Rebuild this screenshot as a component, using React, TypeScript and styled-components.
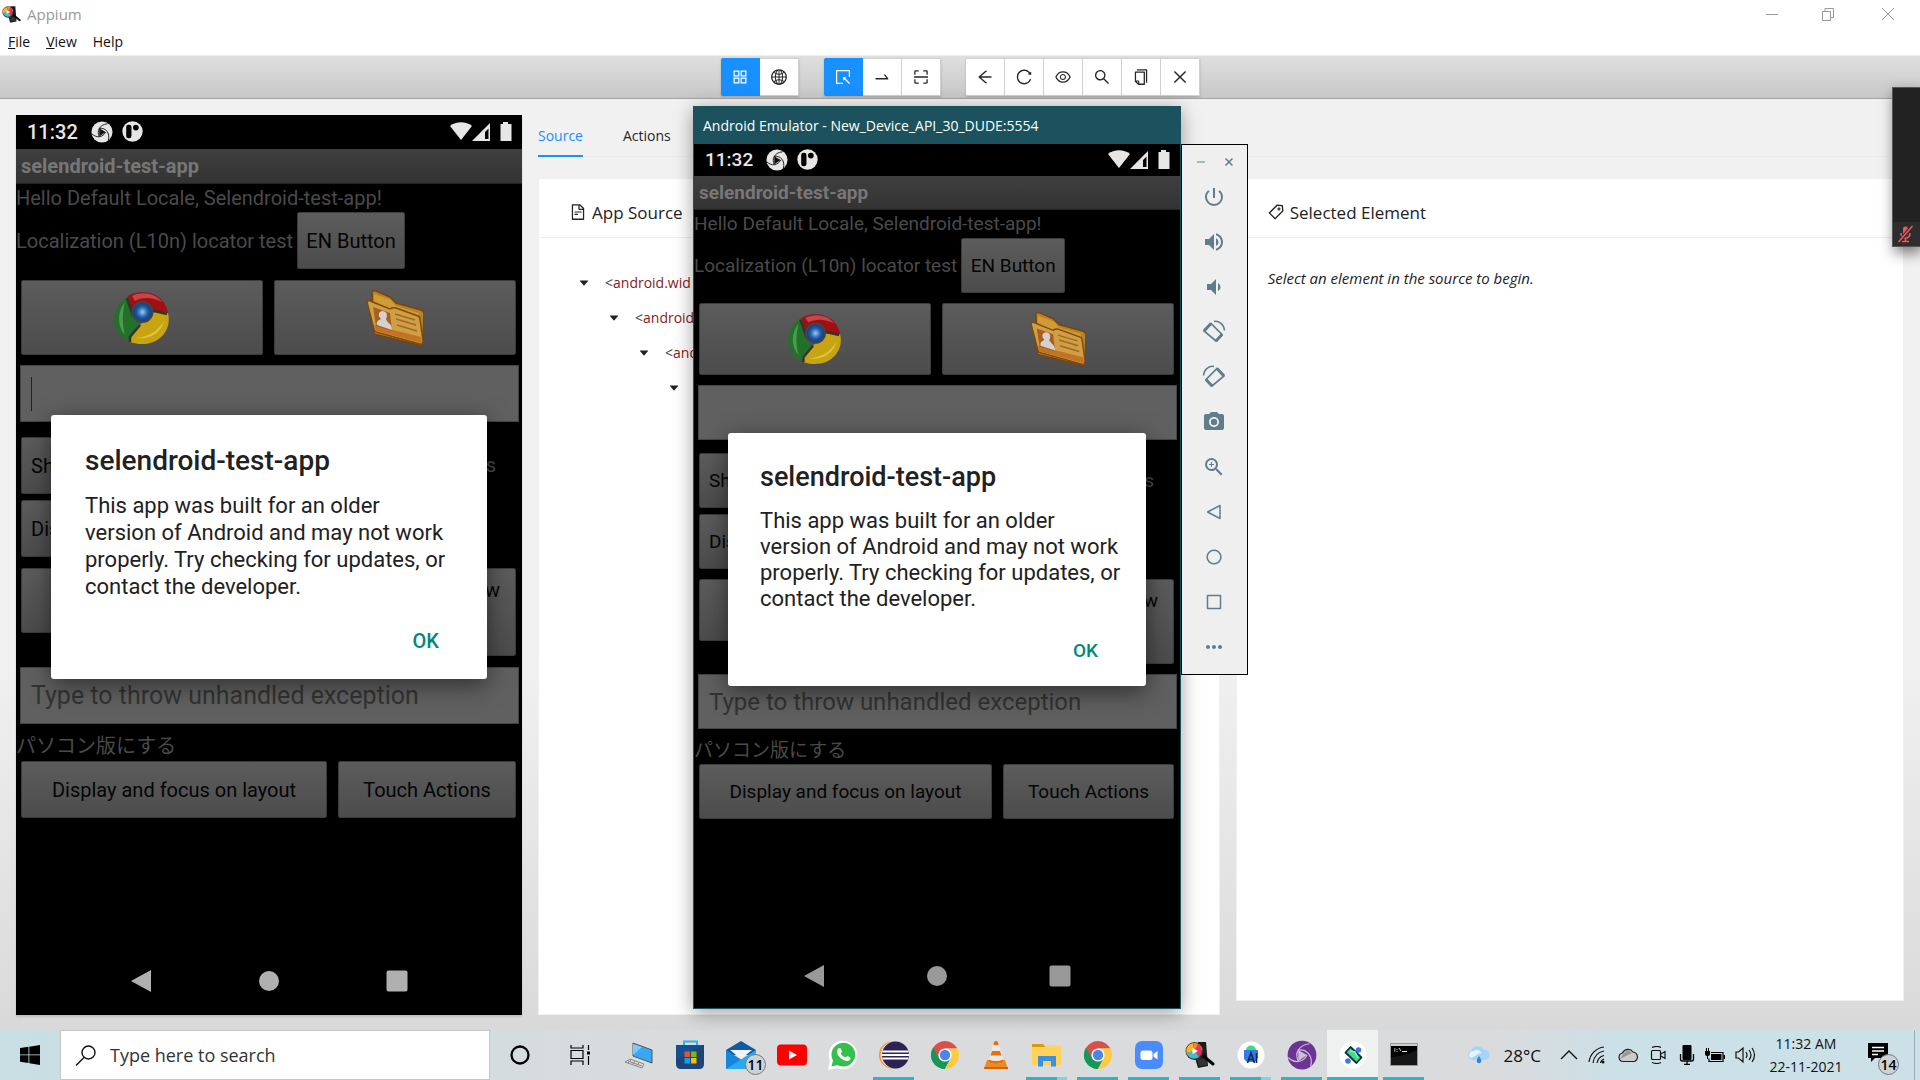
import React, { useId } from 'react';
import styled, { createGlobalStyle, css } from 'styled-components';
import {
  AiOutlineAppstore, AiOutlineGlobal, AiOutlineSelect, AiOutlineSwapRight, AiOutlineScan,
  AiOutlineArrowLeft, AiOutlineReload, AiOutlineEye, AiOutlineSearch, AiOutlineCopy,
  AiOutlineClose, AiOutlineFileText, AiOutlineTag, AiFillCaretDown,
} from 'react-icons/ai';
import { MdPowerSettingsNew, MdVolumeUp, MdVolumeDown, MdPhotoCamera, MdZoomIn, MdMoreHoriz } from 'react-icons/md';

const ui = `"Segoe UI", "Open Sans", "Noto Sans", sans-serif`;
const droid = `Roboto, "Noto Sans CJK JP", sans-serif`;

const GlobalStyle = createGlobalStyle`
  * { box-sizing: border-box; }
  body { margin: 0; font-family: ${ui}; font-size: 14px; color: #222; overflow: hidden; }
  button, input { font: inherit; color: inherit; border: 0; padding: 0; margin: 0; background: none; }
  p, h1, h2 { margin: 0; font-weight: 400; }
  svg { display: block; flex: none; }
`;

const Desktop = styled.div`
  position: relative;
  display: flex;
  flex-direction: column;
  height: 100vh;
`;

/* ---------- Appium window ---------- */

const TitleBar = styled.header`
  display: flex;
  align-items: center;
  height: 28px;
  padding-left: 2px;
  background: #fff;
  color: #999;
`;
const TitleText = styled.h1`
  flex: 1;
  padding-left: 6px;
  font-size: 15px;
`;
const WindowButton = styled.button`
  display: flex;
  justify-content: center;
  width: 56px;
  color: #999;
  &:last-child { width: 64px; }
`;
const MenuBar = styled.nav`
  display: flex;
  gap: 16px;
  height: 27px;
  padding-left: 8px;
  background: #fff;
`;
const MenuButton = styled.button`
  height: 27px;
  padding-bottom: 1px;
  font-size: 14px;
  color: #111;
`;
const ToolBar = styled.div`
  display: flex;
  flex: none;
  justify-content: center;
  align-items: center;
  gap: 25px;
  height: 44px;
  border-top: 1px solid #eee;
  border-bottom: 1px solid #a3a3a3;
  background: linear-gradient(#dfdfdf, #c7c7c7);
`;
const ToolGroup = styled.div`
  display: flex;
  box-shadow: 0 1px 2px rgba(0, 0, 0, 0.2);
`;
const ToolButton = styled.button<{ $on?: boolean }>`
  display: flex;
  align-items: center;
  justify-content: center;
  width: 39px;
  height: 38px;
  border: 1px solid ${p => (p.$on ? '#1890ff' : '#d0d0d0')};
  border-left: 0;
  background: ${p => (p.$on ? '#1890ff' : '#fff')};
  color: ${p => (p.$on ? '#fff' : '#262626')};
  font-size: 18px;
  &:first-child { border-radius: 2px 0 0 2px; }
  &:last-child { border-radius: 0 2px 2px 0; }
`;
const Main = styled.main`
  display: flex;
  flex: 1;
  gap: 16px;
  min-height: 0;
  padding: 16px 16px 15px;
  background: linear-gradient(#f1f1f1 0%, #f1f1f1 60%, #d9d9d9 100%);
`;
const Mirror = styled.section`
  display: flex;
  flex: 0 0 506px;
  box-shadow: 0 2px 2px rgba(0, 0, 0, 0.12);
`;
const Inspector = styled.section`
  display: flex;
  flex: 1;
  flex-direction: column;
`;
const Tabs = styled.div`
  display: flex;
  gap: 40px;
  height: 42px;
  margin-bottom: 21px;
  border-bottom: 1px solid #ececec;
`;
const Tab = styled.button<{ $on?: boolean }>`
  height: 42px;
  color: ${p => (p.$on ? '#1890ff' : '#262626')};
  border-bottom: 2px solid ${p => (p.$on ? '#1890ff' : 'transparent')};
  font-size: 14px;
`;
const Cards = styled.div`
  display: grid;
  flex: 1;
  grid-template-columns: 51fr 50fr;
  gap: 16px;
`;
const Card = styled.section<{ $short?: boolean }>`
  margin-bottom: ${p => (p.$short ? 14 : 0)}px;
  border: 1px solid #f0f0f0;
  background: #fff;
`;
const CardHead = styled.header`
  display: flex;
  align-items: center;
  gap: 5px;
  height: 59px;
  padding: 8px 30px 0;
  border-bottom: 1px solid #eee;
  font-size: 18px;
`;
const CardTitle = styled.h2`
  font-size: 17px;
  font-weight: 500;
  color: #222;
`;
const Tree = styled.ul`
  margin: 0;
  padding: 27px 0 0 39px;
  list-style: none;
`;
const TreeRow = styled.li<{ $depth: number }>`
  display: flex;
  align-items: center;
  gap: 15px;
  height: 35px;
  padding-left: ${p => p.$depth * 30}px;
  font-size: 14px;
  color: #8a1a1a;
  svg { color: #222; }
`;
const Angle = styled.span`
  color: #444;
`;
const Hint = styled.p`
  padding: 30px 31px;
  font-size: 15px;
  font-style: italic;
`;

/* ---------- Android screen ---------- */

type Size = {
  status: number; title: number; hello: number; row: number; images: number; gap: number; half: number;
  tall: number; left: number; last: number; jp: number; nav: number; navPad: number; fs: number; time: number; input: number;
  dTop: number; dSide: number; dHeight: number; dPad: number; dTitle: number; dText: number; dLine: number; dAction: number;
  en: number; focus: number; icon: number; fg: string;
};
const large: Size = {
  status: 34, title: 35, hello: 28, row: 57, images: 75, gap: 11, half: 15, tall: 88, left: 65, last: 11, jp: 37, nav: 68,
  navPad: 114, fs: 20, time: 20, input: 25, dTop: 300, dSide: 35, dHeight: 264, dPad: 34, dTitle: 28, dText: 22, dLine: 27,
  dAction: 26, en: 108, focus: 306, icon: 56, fg: '#b0b0b0',
};
const small: Size = {
  status: 32, title: 34, hello: 28, row: 55, images: 72, gap: 10, half: 13, tall: 85, left: 62, last: 10, jp: 35, nav: 64,
  navPad: 109, fs: 19, time: 19, input: 24, dTop: 289, dSide: 34, dHeight: 253, dPad: 32, dTitle: 27, dText: 22, dLine: 26,
  dAction: 24, en: 104, focus: 293, icon: 54, fg: '#999',
};

const Screen = styled.div<{ $s: Size }>`
  position: relative;
  display: flex;
  flex: 1;
  flex-direction: column;
  background: #000;
  color: #4a4a4a;
  font-family: ${droid};
  font-size: ${p => p.$s.fs}px;
  line-height: 24px;
  white-space: nowrap;
`;
const Status = styled.div<{ $s: Size }>`
  display: flex;
  align-items: center;
  height: ${p => p.$s.status}px;
  padding: 0 8px 0 11px;
  color: #e6e6e6;
  font-size: ${p => p.$s.time}px;
  font-weight: 500;
`;
const Notices = styled.div`
  display: flex;
  flex: 1;
  gap: 9px;
  padding-left: 13px;
`;
const Signals = styled.div`
  display: flex;
  align-items: center;
`;
const AppTitle = styled.div<{ $s: Size }>`
  height: ${p => p.$s.title}px;
  padding-left: 5px;
  border-bottom: 1px solid #222;
  background: linear-gradient(#3f3f3f, #333);
  color: #777;
  font-weight: 700;
  line-height: ${p => p.$s.title}px;
`;
const Line = styled.p<{ $s: Size }>`
  height: ${p => p.$s.hello}px;
  line-height: ${p => p.$s.hello}px;
`;
const Row = styled.div<{ $gap?: number; $end?: boolean }>`
  display: flex;
  align-items: flex-start;
  justify-content: ${p => (p.$end ? 'space-between' : 'flex-start')};
  gap: 11px;
  margin-top: ${p => p.$gap || 0}px;
  padding: 0 6px 0 5px;
`;
const Localized = styled.div`
  display: flex;
  align-items: center;
  gap: 4px;
`;
const DroidButton = styled.button<{ $h: number; $w?: number; $start?: boolean }>`
  display: flex;
  flex: ${p => (p.$w ? `0 0 ${p.$w}px` : '1')};
  align-items: center;
  justify-content: ${p => (p.$start ? 'flex-start' : 'center')};
  height: ${p => p.$h}px;
  padding-left: ${p => (p.$start ? 9 : 0)}px;
  border: 1px solid #3c3c3c;
  border-radius: 2px;
  background: linear-gradient(#5c5c5c, #4c4c4c);
  color: #050505;
`;
const EdgeButton = styled(DroidButton)`
  align-items: flex-start;
  justify-content: flex-end;
  padding: 9px 15px 0 0;
`;
const EdgeText = styled.span<{ $s: Size }>`
  padding-right: 20px;
  line-height: ${p => p.$s.row}px;
`;
const Field = styled.input<{ $s: Size; $gap: number }>`
  height: ${p => p.$s.row}px;
  margin: ${p => p.$gap}px 3px 0 4px;
  padding: 0 10px;
  border: 1px solid #444;
  background: #606060;
  font-size: ${p => p.$s.input}px;
  &::placeholder { color: #333; opacity: 1; }
`;
const CaretField = styled.div<{ $caret?: boolean }>`
  display: flex;
  flex-direction: column;
  position: relative;
  ${p => p.$caret && css`
    &::after {
      content: '';
      position: absolute;
      left: 15px;
      top: 22px;
      width: 1px;
      height: 34px;
      background: #222;
    }
  `}
`;
const Japanese = styled.p<{ $s: Size }>`
  height: ${p => p.$s.jp}px;
  padding-top: 8px;
  line-height: ${p => p.$s.jp - 8}px;
`;
const NavBar = styled.div<{ $s: Size }>`
  display: flex;
  align-items: center;
  justify-content: space-between;
  height: ${p => p.$s.nav}px;
  margin-top: auto;
  padding: 0 ${p => p.$s.navPad}px;
  color: ${p => p.$s.fg};
`;
const Dialog = styled.div<{ $s: Size }>`
  position: absolute;
  top: ${p => p.$s.dTop}px;
  left: ${p => p.$s.dSide}px;
  right: ${p => p.$s.dSide}px;
  height: ${p => p.$s.dHeight}px;
  padding: ${p => p.$s.dPad - 5}px 32px 0 ${p => p.$s.dPad}px;
  border-radius: 3px;
  background: #fff;
  box-shadow: 0 6px 24px rgba(0, 0, 0, 0.5);
  color: #212121;
`;
const DialogTitle = styled.h2<{ $s: Size }>`
  font-size: ${p => p.$s.dTitle}px;
  font-weight: 500;
  line-height: 34px;
`;
const DialogText = styled.p<{ $s: Size }>`
  padding-top: 14px;
  font-size: ${p => p.$s.dText}px;
  line-height: ${p => p.$s.dLine}px;
`;
const DialogAction = styled.button<{ $s: Size }>`
  display: block;
  margin: ${p => p.$s.dAction}px 16px 0 auto;
  height: 30px;
  color: #00897b;
  font-weight: 500;
`;

const Swirl = ({ size, fg, bg }: { size: number; fg: string; bg: string }) => (
  <svg width={size} height={size} viewBox="0 0 24 24">
    <circle cx="12" cy="12" r="11.5" fill={fg} />
    <path d="M9 8l7 4-7 5z" fill={bg} />
    <g fill="none" stroke={bg} strokeWidth="1">
      <path d="M9 17C6 11 9 4 18 3" />
      <path d="M9 8c7-1 12 5 10 13" />
      <path d="M16 12c-3 6-10 7-15 2" />
    </g>
  </svg>
);
const PIcon = () => (
  <svg width="21" height="21" viewBox="0 0 20 20">
    <circle cx="10" cy="10" r="9.7" fill="#e6e6e6" />
    <rect x="4" y="3.5" width="5" height="13" rx="2.3" fill="#000" />
    <circle cx="13.2" cy="6.3" r="2.7" fill="#000" />
  </svg>
);
const SignalIcons = () => (
  <svg width="64" height="22" viewBox="0 0 64 22">
    <g fill="#e6e6e6">
      <path d="M0 5C6 0 16 0 22 5L11 19z" />
      <path fillRule="evenodd" d="M22 20L40 2v18zM35 11v7h3.500V7.500z" />
      <path d="M53 1h5v2h3.500v17h-11V3H53z" />
    </g>
  </svg>
);
const OldChrome = ({ size }: { size: number }) => {
  const id = useId();
  return (
    <svg width={size} height={size} viewBox="0 0 56 56">
      <defs>
        <radialGradient id={id}><stop offset="0" stopColor="#9cc6f0" /><stop offset="0.6" stopColor="#1f5ca8" /><stop offset="1" stopColor="#12407c" /></radialGradient>
      </defs>
      <path d="M13 7C22-1 50-1 54 23L28 19 20 30z" fill="#a00f12" />
      <path d="M18 6c9-5 24-3 30 6-10-5-20-5-27-1z" fill="#c2474a" />
      <path d="M14 6l6 24 9 8-12 14C-6 43-4 17 14 6z" fill="#23702a" />
      <path d="M11 12C3 22 3 36 11 45c-3-11-3-22 0-33z" fill="#4d9a50" />
      <path d="M54 23c5 20-14 37-38 29l-1-5 13-14 8-11z" fill="#c9a412" />
      <path d="M50 31c-3 12-15 19-28 17 13-1 22-7 28-17z" fill="#e0c545" />
      <path d="M13 8l6 18M36 20l17 4M26 35L16 47v5" stroke="#333" strokeWidth="2.500" fill="none" />
      <circle cx="28.500" cy="22" r="11" fill="#3e4652" />
      <circle cx="28.500" cy="22" r="9" fill={`url(#${id})`} />
    </svg>
  );
};
const ContactFolder = ({ size }: { size: number }) => (
  <svg width={size} height={size} viewBox="0 0 58 56">
    <path d="M6 2q1-2 4-1l14 6 6 6 25 7q3 1 3 4l-1 28q-1 4-4 3L8 44z" fill="#b98425" stroke="#774412" strokeWidth="1.500" />
    <path d="M8 4l17 6 5 6 23 7-1 4L26 17l-3 2L8 11z" fill="#d09c35" />
    <path d="M1 12q0-2 3-1l20 8q3-2 6-1l22 8q2 1 2 3l3 22q0 4-3 3L10 42q-2-1-2-3z" fill="#cf9f48" stroke="#80490f" strokeWidth="1.500" />
    <path d="M8 35l47 12 1 6L10 41z" fill="#c27422" />
    <path d="M7 17l17 6 2 18-16-5z" fill="#a85f1c" />
    <path d="M16 21c5 0 6 4 4 8 1 4 6 4 6 11l-15-5c-1-4 2-5 4-6-3-3-3-7 1-8z" fill="#d2d2d2" />
    <path d="M29 24l20 6M30 29l20 6M31 35l20 6" stroke="#a26a20" strokeWidth="1.500" />
  </svg>
);

function Android({ s, caret, name }: { s: Size; caret?: boolean; name: string }) {
  return (
    <Screen $s={s}>
      <Status $s={s}>
        <span>11:32</span>
        <Notices><Swirl size={22} fg="#e6e6e6" bg="#111" /><PIcon /></Notices>
        <Signals><SignalIcons /></Signals>
      </Status>
      <AppTitle $s={s}>selendroid-test-app</AppTitle>
      <Line $s={s}>Hello Default Locale, Selendroid-test-app!</Line>
      <Localized>
        <span>Localization (L10n) locator test</span>
        <DroidButton $h={s.row} $w={s.en}>EN Button</DroidButton>
      </Localized>
      <Row $gap={s.gap}>
        <DroidButton $h={s.images} aria-label="Chrome"><OldChrome size={s.icon} /></DroidButton>
        <DroidButton $h={s.images} aria-label="Contacts"><ContactFolder size={s.icon + 2} /></DroidButton>
      </Row>
      <CaretField $caret={caret}>
        <Field $s={s} $gap={10} aria-label={`${name} text`} />
      </CaretField>
      <Row $gap={s.half} $end>
        <DroidButton $h={s.row} $w={120} $start>Sh</DroidButton>
        <EdgeText $s={s}>s</EdgeText>
      </Row>
      <Row $gap={6}>
        <DroidButton $h={s.row} $w={120} $start>Dis</DroidButton>
      </Row>
      <Row $gap={s.gap} $end>
        <DroidButton $h={s.left} $w={200} aria-label="Throw" />
        <EdgeButton $h={s.tall} $w={200}>w</EdgeButton>
      </Row>
      <Field $s={s} $gap={s.last} placeholder="Type to throw unhandled exception" aria-label={`${name} exception`} />
      <Japanese $s={s}>パソコン版にする</Japanese>
      <Row>
        <DroidButton $h={s.row} $w={s.focus}>Display and focus on layout</DroidButton>
        <DroidButton $h={s.row}>Touch Actions</DroidButton>
      </Row>
      <NavBar $s={s}>
        <svg width="22" height="24" viewBox="0 0 22 24"><path d="M1 12L21 1v22z" fill="currentColor" /></svg>
        <svg width="22" height="22" viewBox="0 0 22 22"><circle cx="11" cy="11" r="10" fill="currentColor" /></svg>
        <svg width="22" height="22" viewBox="0 0 22 22"><rect x="0.500" y="0.500" width="21" height="21" rx="2" fill="currentColor" /></svg>
      </NavBar>
      <Dialog $s={s} role="dialog" aria-label={name}>
        <DialogTitle $s={s}>selendroid-test-app</DialogTitle>
        <DialogText $s={s}>
          This app was built for an older<br />version of Android and may not work<br />
          properly. Try checking for updates, or<br />contact the developer.
        </DialogText>
        <DialogAction $s={s}>OK</DialogAction>
      </Dialog>
    </Screen>
  );
}

/* ---------- Emulator window ---------- */

const Emulator = styled.section`
  position: absolute;
  left: 693px;
  top: 106px;
  display: flex;
  align-items: flex-start;
`;
const EmulatorFrame = styled.div`
  display: flex;
  flex-direction: column;
  width: 488px;
  height: 903px;
  border: 1px solid #1c525d;
  box-shadow: 0 4px 18px rgba(0, 0, 0, 0.38);
`;
const EmulatorTitle = styled.header`
  height: 37px;
  padding-left: 9px;
  background: #1c525d;
  color: #fff;
  font-size: 14px;
  line-height: 38px;
  white-space: nowrap;
`;
const SideBar = styled.div`
  position: relative;
  width: 67px;
  margin-top: 38px;
  padding-bottom: 5px;
  border: 1px solid #000;
  background: #efefef;
  color: #607d8b;
`;
const SideTop = styled.div`
  display: flex;
  align-items: center;
  justify-content: center;
  gap: 20px;
  height: 29px;
  padding-top: 4px;
`;
const SideButton = styled.button`
  display: flex;
  align-items: center;
  justify-content: center;
  width: 64px;
  height: 45px;
  font-size: 24px;
`;
const Rotate = ({ flip }: { flip?: boolean }) => (
  <svg width="24" height="24" viewBox="0 0 24 24" fill="none" stroke="currentColor">
    <g transform={flip ? 'translate(24 0) scale(-1 1)' : undefined}>
      <path d="M2 11L9 3.500l11 11L14 21z" strokeWidth="1.700" />
      <path d="M2 11L9 3.500M20 14.500L14 21" strokeWidth="3" />
      <path d="M12 1.500c5-1 10 3 10.500 9" strokeWidth="1.500" />
    </g>
  </svg>
);
const Shape = ({ d }: { d: string }) => (
  <svg width="16" height="16" viewBox="0 0 16 16" fill="none" stroke="currentColor" strokeWidth="1.500" strokeLinejoin="round"><path d={d} /></svg>
);

/* ---------- Meeting thumbnail ---------- */

const Meeting = styled.aside`
  position: absolute;
  right: 0;
  top: 87px;
  display: flex;
  flex-direction: column;
  justify-content: flex-end;
  width: 28px;
  height: 160px;
  border: 1px solid #555;
  border-right: 0;
  background: #222;
  box-shadow: 2px 6px 14px rgba(0, 0, 0, 0.5);
`;
const Muted = styled.div`
  display: flex;
  align-items: center;
  height: 24px;
  padding-left: 4px;
  background: #2d2d2d;
`;

/* ---------- Taskbar ---------- */

const TaskBar = styled.footer`
  display: flex;
  flex: none;
  height: 50px;
  background: linear-gradient(90deg, #c9dfe4 0, #d0dde1 20%, #dadbdd 35%, #dadbdd 78%, #cbe0e7 84%, #cbe0e7 100%);
  color: #111;
`;
const Start = styled.button`
  display: flex;
  align-items: center;
  justify-content: center;
  width: 60px;
`;
const Search = styled.label`
  display: flex;
  align-items: center;
  gap: 14px;
  width: 430px;
  padding-left: 14px;
  border: 1px solid #c6c6c6;
  background: #fff;
`;
const SearchInput = styled.input`
  flex: 1;
  outline: 0;
  font-size: 18px;
  &::placeholder { color: #333; opacity: 1; }
`;
const SystemButton = styled.button`
  display: flex;
  align-items: center;
  justify-content: center;
  width: 60px;
`;
const Apps = styled.div`
  display: flex;
  margin-left: 3px;
`;
const AppButton = styled.button<{ $open?: boolean; $active?: boolean; $many?: boolean }>`
  position: relative;
  display: flex;
  align-items: center;
  justify-content: center;
  width: 51px;
  background: ${p => (p.$active ? '#eff0f0' : 'transparent')};
  ${p => p.$open && css`
    &::after {
      content: '';
      position: absolute;
      bottom: 0;
      left: ${p.$active ? 0 : 5}px;
      right: ${p.$active ? 0 : 5}px;
      height: 3px;
      background: ${p.$many ? 'linear-gradient(90deg, #2ab5cc 75%, #82d3dd 75%)' : '#2ab5cc'};
    }
  `}
`;
const Badge = styled.span`
  position: absolute;
  right: 0;
  bottom: 5px;
  width: 21px;
  height: 21px;
  border: 1px solid #777;
  border-radius: 50%;
  background: #ccd3d6;
  color: #000;
  font-size: 14px;
  font-weight: 600;
  line-height: 19px;
  text-align: center;
`;
const Tray = styled.div`
  display: flex;
  align-items: center;
  margin-left: auto;
`;
const Weather = styled.button`
  display: flex;
  align-items: center;
  gap: 13px;
  margin-right: 19px;
  font-size: 17px;
`;
const TrayIcons = styled.div`
  display: flex;
  align-items: center;
  gap: 10px;
`;
const Clock = styled.time`
  width: 98px;
  padding-left: 2px;
  font-size: 14px;
  line-height: 23px;
  text-align: center;
`;
const Notify = styled.button`
  position: relative;
  display: flex;
  align-items: center;
  align-self: stretch;
  width: 61px;
  padding: 0 0 6px 14px;
  margin-right: 5px;
  border-right: 1px solid #9db0b6;
  ${Badge} { right: 15px; }
`;

const Chrome = () => (
  <svg width="28" height="28" viewBox="0 0 28 28">
    <path d="M14 14v14A14 14 0 0 1 1.880 7z" fill="#1a9a5c" />
    <path d="M14 7.500h12.400L26.120 7A14 14 0 0 0 1.880 7L8 17z" fill="#d9504a" />
    <path d="M19.800 17L14 28A14 14 0 0 1 1.880 7L8.400 17.500z" fill="#17965a" />
    <path d="M26.400 7.500H14l5.800 9.500L14 28A14 14 0 0 0 26.400 7.500z" fill="#fdcb3f" />
    <circle cx="14" cy="14" r="6.600" fill="#fff" />
    <circle cx="14" cy="14" r="5.200" fill="#4a86ee" />
  </svg>
);
const Appium = ({ size }: { size: number }) => (
  <svg width={size} height={size} viewBox="0 0 30 28">
    <path d="M13 1l8 0 2 24-10 2-3-10z" fill="#1c1c1c" />
    <path d="M12 18l9-1 1 7-8 1z" fill="#333" />
    <path d="M17 14l11 9" stroke="#080808" strokeWidth="3" strokeLinecap="round" />
    <circle cx="9.500" cy="10" r="9" fill="#333" />
    <path d="M9.500 10L1.500 12A8.200 8.200 0 0 1 8 2z" fill="#ffb321" />
    <path d="M8 2a8.200 8.200 0 0 1 9.500 7l-8 1z" fill="#f28a1f" />
    <path d="M13 3a8.200 8.200 0 0 1 1 13l-4.500-6z" fill="#e6315d" />
    <path d="M14 16A8.200 8.200 0 0 1 1.500 12l8-3z" fill="#45bccd" />
    <path d="M7.500 7l5.500 3-5.500 3z" fill="#fff" />
  </svg>
);
const ThisPc = () => (
  <svg width="30" height="28" viewBox="0 0 30 28">
    <path d="M9 2l19 7v13L9 15z" fill="#39a8f3" stroke="#555" />
    <path d="M9 3l9 3-9 8z" fill="#7cc8fa" />
    <path d="M6 18l14 5-2 4L1 21z" fill="#ddd" stroke="#888" />
    <path d="M4 20l14 5M7 19l-3 3M11 20l-3 4M15 22l-3 3" stroke="#888" fill="none" />
  </svg>
);
const Store = () => (
  <svg width="30" height="30" viewBox="0 0 30 30">
    <path d="M9 6V1.500h13V6" stroke="#27b5ec" strokeWidth="2" fill="none" />
    <path d="M1 5h28v19q0 5-5 5H6q-5 0-5-5z" fill="#1d4577" />
    <path d="M1 5h28L1 20z" fill="#0c5ca8" opacity=".5" />
    <path d="M9.500 11.500h5.500v5.500H9.500z" fill="#f25022" /><path d="M16 11.500h5.500v5.500H16z" fill="#7fba00" />
    <path d="M9.500 18h5.500v5.500H9.500z" fill="#00a4ef" /><path d="M16 18h5.500v5.500H16z" fill="#ffb900" />
  </svg>
);
const Mail = () => (
  <svg width="30" height="28" viewBox="0 0 30 28">
    <path d="M0 9L15 0l15 9v5H0z" fill="#0f59a5" />
    <path d="M0 9l30 19H0z" fill="#1586dc" /><path d="M30 9L0 28h30z" fill="#2ba9ef" /><path d="M4 9h22L15 18z" fill="#f3f3f3" />
  </svg>
);
const YouTube = () => (
  <svg width="30" height="22" viewBox="0 0 30 22"><rect width="30" height="21" y=".5" rx="4" fill="#f00" /><path d="M12 6.500l8 4.500-8 4.500z" fill="#fff" /></svg>
);
const WhatsApp = () => (
  <svg width="30" height="30" viewBox="0 0 30 30">
    <path d="M0 30l2-9A14.300 14.300 0 1 1 9 28z" fill="#fff" />
    <path d="M3.500 26.500l1.500-6A11.900 11.900 0 1 1 9.500 25z" fill="#35c04b" />
    <path d="M10.500 8.500c1-1 2-.5 2.500.5l1 2.500c0 .8-1.500 1.500-1 2.200 1 1.800 2.500 3 4.300 3.800.8.3 1.400-1.700 2.200-1.500l2.500 1.200c1 .6.5 2.300-.5 3.100-2 1.400-5 .3-7.500-1.300-3-2-5.500-5.500-5-8 .2-1 .8-2 1.500-2.500z" fill="#fff" />
  </svg>
);
const Eclipse = () => (
  <svg width="30" height="28" viewBox="0 0 30 28">
    <circle cx="13.500" cy="14" r="13.500" fill="#f79433" /><circle cx="14.800" cy="14" r="13.200" fill="#e5e5ea" />
    <circle cx="16.500" cy="14" r="13.500" fill="#2c2255" />
    <path d="M3.500 10.500h26M3 14h27M3.500 17.500h26" stroke="#fff" strokeWidth="1.800" />
  </svg>
);
const Vlc = () => (
  <svg width="26" height="28" viewBox="0 0 26 28">
    <path d="M4 19h18l3 9H1z" fill="#f08a1c" /><path d="M1 26h24v2H1z" fill="#c9660e" />
    <path d="M11 1q2-2 4 0l6 20q-8 4-16 0z" fill="#e9e9e9" />
    <path d="M11 1q2-2 4 0l.6 3h-5.200zM9 10h8l1.500 4.500h-11zM5.800 18.500q7 3 14.400 0l.8 2.500q-8 4-16 0z" fill="#e5700f" />
  </svg>
);
const Explorer = () => (
  <svg width="30" height="24" viewBox="0 0 30 24">
    <path d="M0 1h11l3 3H0z" fill="#d99a06" /><path d="M0 4h12l2-1.500h14q1.500 0 1.500 2V22H0z" fill="#ffd35b" />
    <path d="M6 23.500V13h18v10.500h-5V18h-8v5.500z" fill="#3a92de" />
  </svg>
);
const ZoomApp = () => (
  <svg width="28" height="28" viewBox="0 0 28 28"><rect width="28" height="28" rx="7" fill="#4a8cff" /><rect x="5.500" y="9.500" width="12" height="9.500" rx="2.500" fill="#fff" /><path d="M18.500 13l4-3v8.500l-4-3z" fill="#fff" /></svg>
);
const Studio = () => (
  <svg width="28" height="28" viewBox="0 0 28 28">
    <circle cx="14" cy="14" r="13.500" fill="#fff" /><path d="M9 9a5 4.500 0 0 1 10 0z" fill="#3ddc84" />
    <path d="M7 9h14v8l-3 4h-8l-3-3z" fill="#3b78e7" />
    <path d="M10.500 22l3.500-10 3.500 10M12 18.500h4M19.500 12v10" stroke="#0b2b4c" strokeWidth="1.600" fill="none" />
  </svg>
);
const EmulatorApp = () => (
  <svg width="28" height="28" viewBox="0 0 28 28">
    <circle cx="14" cy="14" r="13.500" fill="#fff" /><circle cx="9" cy="20" r="2.800" fill="#3b78e7" /><circle cx="19.500" cy="9" r="2.800" fill="#3b78e7" />
    <path d="M6.500 11.500l5-5.500 11 10.500-5 5.500z" fill="#3ddc84" stroke="#073042" strokeWidth="1.800" strokeLinejoin="round" />
    <path d="M11 10l5 1 3 6" stroke="#8ff0b8" strokeWidth="1.500" fill="none" />
  </svg>
);
const Cmd = () => (
  <svg width="28" height="24" viewBox="0 0 28 24"><rect x=".5" y=".5" width="27" height="22" fill="#000" stroke="#999" /><path d="M1 1h26v2H1z" fill="#ccc" /><path d="M1 22V14q14-1 26-7v15z" fill="#161616" /><path d="M4 6h1.500M4 8h1.500M7 6v.8M7 8v.8M9 5l2 3M12 8.500h5" stroke="#ddd" /></svg>
);
const RainCloud = () => (
  <svg width="26" height="20" viewBox="0 0 25 20"><path d="M6 15a5.500 5.500 0 0 1 0-10 7 7 0 0 1 12.500 0 5 5 0 0 1 1 10z" fill="#a2d4fc" /><path d="M5 13a4 4 0 0 1 3-7 5 5 0 0 1 8 2c-4 0-5 3-11 5z" fill="#e6f4ff" /><path d="M13.500 11q3 4 2 6-2 2.500-4 0-1-2 2-6z" fill="#2786e0" /></svg>
);
const MicOff = () => (
  <svg width="17" height="18" viewBox="0 0 17 18" fill="none" stroke="#f0555a" strokeWidth="1.600"><rect x="6" y="1.500" width="5" height="9" rx="2.500" fill="#f0555a" stroke="none" /><path d="M4 8q0 5 4.500 5T13 8M8.500 13v3M5 16.500h7" /><path d="M15 1L2 17" stroke="#2d2d2d" strokeWidth="3.500" /><path d="M15.500 1L1.500 17" /></svg>
);

const tools = [
  [{ n: 'Native mode', i: AiOutlineAppstore, on: true }, { n: 'Web mode', i: AiOutlineGlobal }],
  [{ n: 'Select', i: AiOutlineSelect, on: true }, { n: 'Swipe', i: AiOutlineSwapRight }, { n: 'Tap', i: AiOutlineScan }],
  [
    { n: 'Back', i: AiOutlineArrowLeft }, { n: 'Refresh', i: AiOutlineReload }, { n: 'Record', i: AiOutlineEye },
    { n: 'Search element', i: AiOutlineSearch }, { n: 'Copy source', i: AiOutlineCopy }, { n: 'Quit', i: AiOutlineClose },
  ],
] as { n: string; i: React.ComponentType; on?: boolean }[][];

const sideTools = [
  ['Power', <MdPowerSettingsNew key="p" />], ['Volume up', <MdVolumeUp key="u" />], ['Volume down', <MdVolumeDown key="d" />],
  ['Rotate left', <Rotate key="l" />], ['Rotate right', <Rotate key="r" flip />], ['Take screenshot', <MdPhotoCamera key="c" />],
  ['Zoom', <MdZoomIn key="z" />], ['Back', <Shape key="b" d="M1.500 8L14 1.500v13z" />],
  ['Home', <Shape key="h" d="M8 1.200a6.800 6.800 0 1 0 .1 0z" />], ['Overview', <Shape key="o" d="M1.500 1.500h13v13h-13z" />],
  ['More', <MdMoreHoriz key="m" />],
] as [string, React.ReactNode][];

const apps = [
  { n: 'This PC', i: <ThisPc /> }, { n: 'Store', i: <Store /> }, { n: 'Mail', i: <Mail />, badge: '11' },
  { n: 'YouTube', i: <YouTube /> }, { n: 'WhatsApp', i: <WhatsApp /> }, { n: 'Eclipse', i: <Eclipse />, open: true },
  { n: 'Chrome', i: <Chrome /> }, { n: 'VLC', i: <Vlc /> }, { n: 'File Explorer', i: <Explorer />, open: true, many: true },
  { n: 'Chrome profile', i: <Chrome />, open: true }, { n: 'Zoom', i: <ZoomApp />, open: true },
  { n: 'Appium Inspector', i: <Appium size={30} />, open: true }, { n: 'Android Studio', i: <Studio />, open: true, many: true },
  { n: 'Appium Server', i: <Swirl size={30} fg="#6b3392" bg="#cdbdd9" />, open: true },
  { n: 'Emulator', i: <EmulatorApp />, open: true, active: true }, { n: 'Command Prompt', i: <Cmd />, open: true },
] as { n: string; i: React.ReactNode; open?: boolean; many?: boolean; active?: boolean; badge?: string }[];

export default function App() {
  return (
    <Desktop>
      <GlobalStyle />
      <TitleBar>
        <Appium size={19} />
        <TitleText>Appium</TitleText>
        <WindowButton aria-label="Minimize"><svg width="12" height="14" viewBox="0 0 12 14"><path d="M0 7.500h12" stroke="currentColor" /></svg></WindowButton>
        <WindowButton aria-label="Restore"><svg width="12" height="13" viewBox="0 0 12 13" fill="none" stroke="currentColor"><path d="M.5 3.500h8v9h-8zM3 3V.5h8.500v9H9" /></svg></WindowButton>
        <WindowButton aria-label="Close"><svg width="12" height="12" viewBox="0 0 12 12"><path d="M0 0l12 12M12 0L0 12" stroke="currentColor" /></svg></WindowButton>
      </TitleBar>
      <MenuBar>
        <MenuButton><u>F</u>ile</MenuButton>
        <MenuButton><u>V</u>iew</MenuButton>
        <MenuButton>Help</MenuButton>
      </MenuBar>
      <ToolBar>
        {tools.map((group, g) => (
          <ToolGroup key={g}>
            {group.map(({ n, i: Icon, on }) => <ToolButton key={n} $on={on} aria-label={n}><Icon /></ToolButton>)}
          </ToolGroup>
        ))}
      </ToolBar>
      <Main>
        <Mirror><Android s={large} caret name="Device screenshot" /></Mirror>
        <Inspector>
          <Tabs>
            <Tab $on>Source</Tab>
            <Tab>Actions</Tab>
          </Tabs>
          <Cards>
            <Card>
              <CardHead><AiOutlineFileText /><CardTitle>App Source</CardTitle></CardHead>
              <Tree>
                {['android.wid', 'android', 'and', ''].map((tag, depth) => (
                  <TreeRow key={depth} $depth={depth}>
                    <AiFillCaretDown size={12} />
                    {tag && <span><Angle>&lt;</Angle>{tag}</span>}
                  </TreeRow>
                ))}
              </Tree>
            </Card>
            <Card $short>
              <CardHead><AiOutlineTag /><CardTitle>Selected Element</CardTitle></CardHead>
              <Hint>Select an element in the source to begin.</Hint>
            </Card>
          </Cards>
        </Inspector>
      </Main>

      <TaskBar>
        <Start aria-label="Start"><svg width="20" height="20" viewBox="0 0 20 20"><path d="M0 3l8.500-1.200v7.700H0zM9.300 1.700L20 0v9.500H9.300zM0 10.300h8.500V18L0 16.800zM9.300 10.300H20V20L9.300 18.200z" /></svg></Start>
        <Search>
          <svg width="21" height="21" viewBox="0 0 21 21" fill="none" stroke="#111" strokeWidth="1.400"><circle cx="13.500" cy="7.500" r="6.500" /><path d="M9 12.500L1 20.500" /></svg>
          <SearchInput placeholder="Type here to search" aria-label="Search" />
        </Search>
        <SystemButton aria-label="Cortana"><svg width="20" height="20" viewBox="0 0 20 20"><circle cx="10" cy="10" r="8.500" fill="none" stroke="#000" strokeWidth="2.300" /></svg></SystemButton>
        <SystemButton aria-label="Task view"><svg width="20" height="20" viewBox="0 0 20 20" fill="none" stroke="#000" strokeWidth="1.200"><path d="M1 5.500h12v8H1zM1 0v3h12V0M1 20v-4h12v4M18.500 0v5M18.500 11v9" /><path d="M17 6.500h3v3h-3z" fill="#000" stroke="none" /></svg></SystemButton>
        <Apps>
          {apps.map(a => (
            <AppButton key={a.n} aria-label={a.n} $open={a.open} $many={a.many} $active={a.active}>
              {a.i}
              {a.badge && <Badge>{a.badge}</Badge>}
            </AppButton>
          ))}
        </Apps>
        <Tray>
          <Weather><RainCloud />28°C</Weather>
          <TrayIcons>
            <svg width="18" height="20" viewBox="0 0 18 20"><path d="M1 14l8-8 8 8" fill="none" stroke="#111" strokeWidth="1.400" /></svg>
            <svg width="20" height="18" viewBox="0 0 20 18" fill="none" stroke="#111" strokeWidth="1.200"><path d="M1 16C2 8 8 2 16 1M5 17C6 10 10 6 16 5M9 17q1-6 7-7.500M12.500 17q.5-3 3.500-4" /><circle cx="15" cy="16" r="1.500" fill="#111" stroke="none" /></svg>
            <svg width="21" height="16" viewBox="0 0 21 16"><path d="M5 14.500a4.300 4.300 0 0 1-.5-8.500A6 6 0 0 1 15 5a5 5 0 0 1 1.500 9.500z" fill="#ccc" stroke="#222" strokeWidth="1.200" /><path d="M2 12L14 6l-4-3-5 4z" fill="#999" /></svg>
            <svg width="20" height="18" viewBox="0 0 20 18" fill="none" stroke="#111" strokeWidth="1.200"><rect x="2.500" y="4.500" width="9" height="9" rx="1" /><path d="M12 8l4-2.500v7L12 10M3 1.500q5-2 9 0M3 16.500q5 2 9 0" /></svg>
            <svg width="16" height="20" viewBox="0 0 16 20"><rect x="3.500" y="0" width="9" height="15" rx="1" /><path d="M1.500 9v5q0 2 2 2h9q2 0 2-2V9M8 16v3M5 19.300h6" fill="none" stroke="#000" strokeWidth="1.300" /></svg>
            <svg width="20" height="15" viewBox="0 0 20 15"><path d="M6 4.500h12v9H4v-3" fill="none" stroke="#000" strokeWidth="1.200" /><path d="M6 6h10.500v6H6zM18.500 7h1.500v4h-1.500zM0 3h5v3q0 2-2 2v3H2V8Q0 8 0 6zM1 0h1v3H1zM3 0h1v3H3z" /></svg>
            <svg width="21" height="18" viewBox="0 0 21 18" fill="none" stroke="#111" strokeWidth="1.200"><path d="M1 6h2.500L8 2v14l-4.500-4H1zM11 6q2 3 0 6M14 4q4 5 0 10M17 2q5 7 0 14" /></svg>
          </TrayIcons>
          <Clock>11:32 AM<br />22-11-2021</Clock>
          <Notify aria-label="Notifications">
            <svg width="20" height="19" viewBox="0 0 20 19"><path d="M0 0h20v15H7l-4 4v-4H0z" /><path d="M4 4.500h12M4 8h12M4 11.500h6" stroke="#fff" strokeWidth="1.300" /></svg>
            <Badge>14</Badge>
          </Notify>
        </Tray>
      </TaskBar>

      <Emulator>
        <EmulatorFrame>
          <EmulatorTitle>Android Emulator - New_Device_API_30_DUDE:5554</EmulatorTitle>
          <Android s={small} name="Emulator screen" />
        </EmulatorFrame>
        <SideBar>
          <SideTop>
            <button aria-label="Minimize emulator"><svg width="8" height="8" viewBox="0 0 8 8"><path d="M0 4h8" stroke="#9db0b9" strokeWidth="1.800" /></svg></button>
            <button aria-label="Close emulator"><svg width="8" height="8" viewBox="0 0 8 8"><path d="M.5.5l7 7M7.500.5l-7 7" stroke="#607d8b" strokeWidth="1.500" /></svg></button>
          </SideTop>
          {sideTools.map(([n, icon]) => <SideButton key={n} aria-label={`Emulator ${n}`}>{icon}</SideButton>)}
        </SideBar>
      </Emulator>
      <Meeting><Muted><MicOff /></Muted></Meeting>
    </Desktop>
  );
}
